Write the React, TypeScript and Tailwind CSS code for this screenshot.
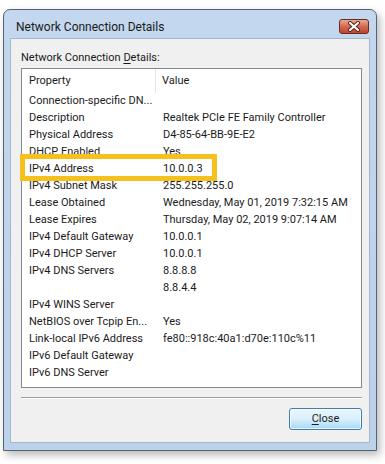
const rows: [string, string][] = [
  ['Connection-specific DN...', ''],
  ['Description', 'Realtek PCIe FE Family Controller'],
  ['Physical Address', 'D4-85-64-BB-9E-E2'],
  ['DHCP Enabled', 'Yes'],
  ['IPv4 Address', '10.0.0.3'],
  ['IPv4 Subnet Mask', '255.255.255.0'],
  ['Lease Obtained', 'Wednesday, May 01, 2019 7:32:15 AM'],
  ['Lease Expires', 'Thursday, May 02, 2019 9:07:14 AM'],
  ['IPv4 Default Gateway', '10.0.0.1'],
  ['IPv4 DHCP Server', '10.0.0.1'],
  ['IPv4 DNS Servers', '8.8.8.8'],
  ['', '8.8.4.4'],
  ['IPv4 WINS Server', ''],
  ['NetBIOS over Tcpip En...', 'Yes'],
  ['Link-local IPv6 Address', 'fe80::918c:40a1:d70e:110c%11'],
  ['IPv6 Default Gateway', ''],
  ['IPv6 DNS Server', ''],
]

function CloseGlyph() {
  return (
    <svg width="14" height="11" viewBox="0 0 14 11">
      <path d="M3 2 L11 9 M11 2 L3 9" stroke="#5a1d12" strokeWidth="4" strokeLinecap="round" />
      <path d="M3 2 L11 9 M11 2 L3 9" stroke="#ffffff" strokeWidth="2.2" strokeLinecap="round" />
    </svg>
  )
}

export default function App() {
  return (
    <div className="relative h-[464px] w-[385px] overflow-hidden bg-white pl-[3px] pt-[9px] font-['Segoe_UI',Roboto,'Liberation_Sans',sans-serif] text-[11px] text-[#1b1b1b]">
      <div className="flex h-[442px] w-[374px] flex-col rounded-t-[7px] border border-[#55626f] bg-gradient-to-b from-[#c3d7ee] via-[#bfd4ec] to-[#bcd2ea] shadow-[3px_4px_8px_rgba(0,0,0,0.28)]">
        {/* title bar */}
        <div className="flex h-[28px] items-start justify-between pl-[12px] pr-[7px]">
          <span className="pt-[9px] text-[12px] leading-[16px] text-[#1a1a1a]">Network Connection Details</span>
          <button
            type="button"
            className="mt-[9px] flex h-[15px] w-[30px] items-center justify-center rounded-[3px] border border-[#6b2b1f] bg-gradient-to-b from-[#e9a897] via-[#d26a50] to-[#c0452a]"
          >
            <CloseGlyph />
          </button>
        </div>

        {/* client area */}
        <div className="mx-[6px] mb-[7px] flex flex-1 flex-col border border-[#a3b8cf] bg-[#f0f0f0] pl-[10px] pr-[7px]">
          <p className="mt-[11px] leading-[16px]">
            Network Connection <span className="underline underline-offset-2">D</span>etails:
          </p>

          <div className="relative mt-[2px] h-[320px] border border-[#828790] bg-white">
            <div className="flex h-[24px] items-center">
              <div className="flex h-full w-[134px] shrink-0 items-center border-r border-[#e3e5e8] pl-[7px]">Property</div>
              <div className="pl-[6px]">Value</div>
            </div>
            {rows.map(([prop, value], i) => (
              <div key={i} className="flex h-[17px] items-center whitespace-nowrap">
                <div className="w-[134px] shrink-0 overflow-hidden pl-[7px]">{prop}</div>
                <div className="pl-[7px]">{value}</div>
              </div>
            ))}
            <div className="pointer-events-none absolute left-[-2px] top-[85px] h-[27px] w-[197px] border-[5px] border-[#f6c11c]" />
          </div>

          <div className="mt-[9px] border-t border-b border-t-[#a0a0a0] border-b-white" />

          <div className="mt-[9px] flex justify-end">
            <button
              type="button"
              className="h-[22px] w-[73px] rounded-[3px] border border-[#3c7fb1] bg-gradient-to-b from-[#eaf6fd] via-[#d9f0fc] to-[#a7d9f5] shadow-[inset_0_0_0_1px_rgba(255,255,255,0.7)]"
            >
              <span className="underline underline-offset-2">C</span>lose
            </button>
          </div>
        </div>
      </div>
    </div>
  )
}
